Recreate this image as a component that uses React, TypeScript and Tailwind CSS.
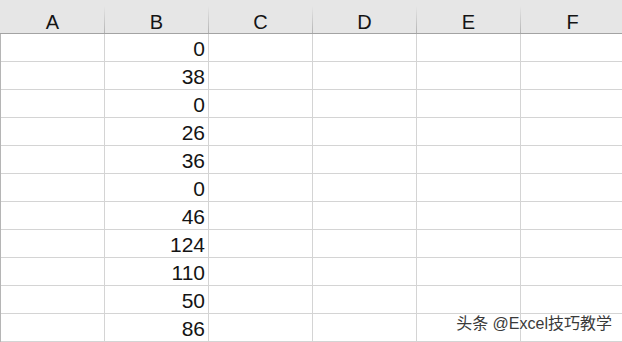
import { FC } from "react";

const columns = ["A", "B", "C", "D", "E", "F"];
const values = [0, 38, 0, 26, 36, 0, 46, 124, 110, 50, 86];

const HeaderCell: FC<{ label: string }> = ({ label }) => (
    <div className="flex w-[104px] shrink-0 h-full">
        <div className="flex-1 flex items-end justify-center text-[20px] leading-[22px] text-[#141414]">
            {label}
        </div>
        <div className="w-px h-[27px] self-end bg-gradient-to-b from-[#e6e6e6] to-[#b4b4b4]" />
    </div>
);

const App: FC = () => {
    return (
        <div
            className="relative w-[622px] h-[342px] overflow-hidden bg-white"
            style={{ fontFamily: '"Liberation Sans", Arial, sans-serif' }}
        >
            <div className="flex h-[34px] pl-px bg-[#e6e6e6] border-b border-[#a3a3a3]">
                {columns.map((c) => (
                    <HeaderCell key={c} label={c} />
                ))}
            </div>
            <div className="border-l border-[#b5b5b5]">
                {values.map((v, i) => (
                    <div key={i} className="flex h-[28px] border-b border-[#d4d4d4]">
                        {columns.map((c) => (
                            <div
                                key={c}
                                className="w-[104px] shrink-0 flex items-end justify-end pr-[3px] border-r border-[#d4d4d4] text-[21px] leading-[24px] text-[#141414]"
                            >
                                {c === "B" ? v : ""}
                            </div>
                        ))}
                    </div>
                ))}
            </div>
            <div
                className="absolute right-[10px] top-[313px] text-[16px] leading-[22px] text-[#3a3a3a] whitespace-nowrap"
                style={{
                    fontFamily: '"Liberation Sans", "Noto Sans CJK SC", sans-serif',
                    textShadow: "0 0 2px #fff, 0 0 1px #fff",
                }}
            >
                头条 @Excel技巧教学
            </div>
        </div>
    );
};

export default App;
